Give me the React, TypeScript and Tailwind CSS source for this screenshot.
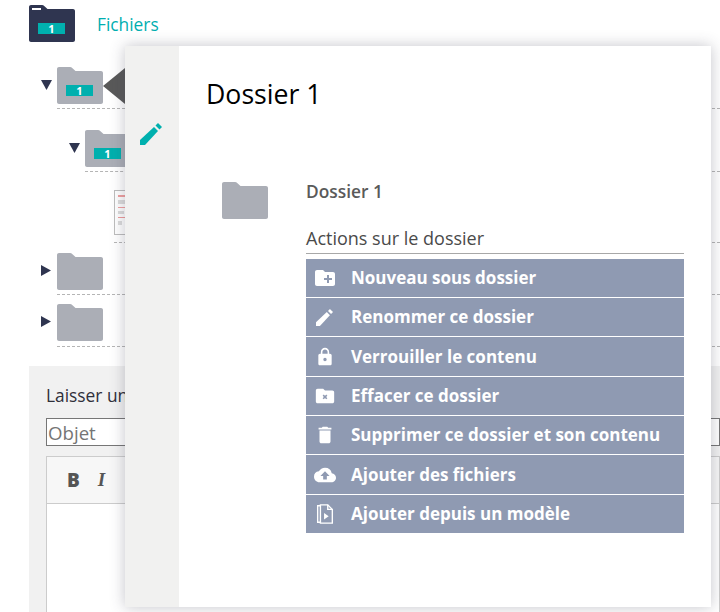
import { MdCloudUpload, MdCreateNewFolder, MdDelete, MdLock } from "react-icons/md";
import type { ReactNode } from "react";

function Folder({ num, dark }: { num?: boolean; dark?: boolean }) {
  const fill = dark ? "#2f3550" : "#abaeb6";
  return (
    <svg width="46" height="37" viewBox="0 0 46 37" className="block shrink-0">
      <path
        d="M2 0h11c1 0 1.600.4 2.200 1l3.300 3H44c1.100 0 2 .9 2 2v29c0 1.100-.9 2-2 2H2c-1.100 0-2-.9-2-2V2C0 .9.900 0 2 0z"
        fill={fill}
      />
      {dark && <rect x="3" y="3" width="9" height="2" fill="#fff" />}
      {num && (
        <>
          <rect x="9" y="18" width="27" height="11" fill="#00b0ae" />
          <text x="22.500" y="28" textAnchor="middle" fontSize="11" fontWeight="700" fill="#fff" fontFamily="Open Sans">
            1
          </text>
        </>
      )}
    </svg>
  );
}

function Caret({ open }: { open?: boolean }) {
  return open ? (
    <svg width="11" height="10" viewBox="0 0 11 10" className="block mt-px">
      <path d="M0 0h11L5.500 10z" fill="#2f3550" />
    </svg>
  ) : (
    <svg width="10" height="11" viewBox="0 0 10 11" className="block">
      <path d="M0 0l10 5.500L0 11z" fill="#2f3550" />
    </svg>
  );
}

function Pencil({ size, color }: { size: number; color: string }) {
  return (
    <svg width={size} height={size} viewBox="0 0 22 22" fill={color} className="block">
      <path d="M0 17L14 4l4 4L5 22H0z" />
      <path d="M15.500 2.500L18 0l4 4-2.500 2.500z" />
    </svg>
  );
}

function TreeRow({
  indent,
  open,
  num,
  height,
  pad = "pb-[4px]",
}: {
  indent: string;
  open?: boolean;
  num?: boolean;
  height: string;
  pad?: string;
}) {
  return (
    <div className={`flex items-start ${indent} ${height}`}>
      <div className="w-[16px] mt-[12px]">
        <Caret open={open} />
      </div>
      <div className={`flex-1 border-b border-dashed border-[#b5b5b5] ${pad}`}>
        <Folder num={num} />
      </div>
    </div>
  );
}

function Thumb() {
  return (
    <div className="ml-[114px] mt-[18px] border-b border-dashed border-[#b5b5b5] pb-[7px]">
      <div className="w-[30px] h-[45px] border border-[#bdbdbd] bg-white pl-[3px] pt-[4px] flex flex-col gap-[3px]">
        <div className="h-[2px] w-[8px] bg-[#f0a0a0]" />
        <div className="h-[4px] w-[8px] bg-[#dcdcdc]" />
        <div className="h-[1px] w-[8px] bg-[#f0a0a0]" />
        <div className="h-[3px] w-[6px] bg-[#dcdcdc]" />
        <div className="h-[1px] w-[8px] bg-[#ee9a9a]" />
        <div className="h-[4px] w-[4px] bg-[#dcdcdc]" />
      </div>
    </div>
  );
}

function FolderX() {
  return (
    <svg width="22" height="22" viewBox="0 0 24 24" fill="#fff">
      <path d="M20 6h-8l-2-2H4c-1.100 0-2 .9-2 2v12c0 1.100.9 2 2 2h16c1.100 0 2-.9 2-2V8c0-1.100-.9-2-2-2z" />
      <path d="M10 11l4 4M14 11l-4 4" stroke="#8f9ab2" strokeWidth="1.700" />
    </svg>
  );
}

function Template() {
  return (
    <svg width="22" height="22" viewBox="0 0 24 24" fill="none" stroke="#fff" strokeWidth="1.500">
      <path d="M7 3H4v18h3" />
      <path d="M7 2h8l5 5v15H7z" />
      <path d="M15 2v5h5" />
      <path d="M11 11l5 3.500-5 3.500z" fill="#fff" stroke="none" />
    </svg>
  );
}

const actions: { label: string; icon: ReactNode; h: string }[] = [
  { label: "Nouveau sous dossier", icon: <MdCreateNewFolder size={24} />, h: "h-[38px]" },
  { label: "Renommer ce dossier", icon: <Pencil size={17} color="#fff" />, h: "h-[38px]" },
  { label: "Verrouiller le contenu", icon: <MdLock size={20} />, h: "h-[39px]" },
  { label: "Effacer ce dossier", icon: <FolderX />, h: "h-[38px]" },
  { label: "Supprimer ce dossier et son contenu", icon: <MdDelete size={22} />, h: "h-[38px]" },
  { label: "Ajouter des fichiers", icon: <MdCloudUpload size={22} />, h: "h-[39px]" },
  { label: "Ajouter depuis un modèle", icon: <Template />, h: "h-[38px]" },
];

export default function App() {
  return (
    <div className="relative h-[612px] w-[720px] overflow-hidden bg-white font-['Open_Sans',sans-serif]">
      {/* page behind the panel */}
      <div className="flex items-center pl-[29px] pt-[5px] gap-[22px] h-[41px]">
        <Folder num dark />
        <span className="mt-[4px] text-[17.330px] font-medium text-[#00aeb0]">Fichiers</span>
      </div>
      <div className="pt-[26px]">
        <TreeRow indent="ml-[41px]" open num height="h-[63px]" />
        <TreeRow indent="ml-[69px]" open num height="h-[42px]" />
        <Thumb />
        <div className="mt-[10px]">
          <TreeRow indent="ml-[41px]" height="h-[51px]" />
          <TreeRow indent="ml-[41px]" height="h-[43px]" pad="pb-[5px]" />
        </div>
      </div>
      <div className="mt-[19px] ml-[29px] h-[246px] bg-[#f1f1f1] pl-[17px] pt-[18px]">
        <p className="text-[17.330px] leading-[22px] text-[#2f2f3a]">Laisser un message</p>
        <input
          placeholder="Objet"
          className="mt-[12px] block h-[28px] w-full border border-[#767676] bg-white px-px text-[18.670px] placeholder:text-[#757575]"
        />
        <div className="mt-[10px] h-[200px] border border-[#cccccc] bg-white">
          <div className="flex h-[47px] items-center gap-[18px] border-b border-[#cccccc] bg-[#f7f7f7] pl-[20px] text-[19px] text-[#555555]">
            <span className="font-extrabold">B</span>
            <span className="font-['Liberation_Serif',serif] font-bold italic">I</span>
          </div>
        </div>
      </div>

      {/* callout arrow */}
      <div className="absolute left-[103px] top-[68px] border-y-[18px] border-r-[22px] border-y-transparent border-r-[#595959]" />

      {/* folder panel */}
      <div className="absolute left-[125px] top-[46px] flex h-[561px] w-[586px] bg-white shadow-[0_0_14px_rgba(60,60,80,0.3)]">
        <div className="w-[54px] shrink-0 bg-[#f1f1f0] pt-[77px] pl-[15px]">
          <Pencil size={22} color="#00b0ae" />
        </div>
        <div className="flex-1">
          <h1 className="pl-[27px] pt-[30px] text-[26.670px] leading-[36px] font-normal text-black">Dossier 1</h1>
          <div className="flex pt-[50px] pl-[43px]">
            <div className="pt-[20px]">
              <Folder />
            </div>
            <div className="ml-[38px] w-[378px] pt-[18px]">
              <p className="text-[17.330px] leading-[22px] font-semibold text-[#5a5a5a]">Dossier 1</p>
              <p className="mt-[25px] text-[18px] leading-[22px] text-[#4a4a4a] border-b border-[#a8a8a8] pb-[4px]">
                Actions sur le dossier
              </p>
              <div className="mt-[5px] flex flex-col gap-px">
                {actions.map((a) => (
                  <div key={a.label} className={`flex items-center bg-[#8f9ab2] text-white ${a.h}`}>
                    <span className="flex w-[45px] shrink-0 justify-center pr-[10px] pl-[2px]">{a.icon}</span>
                    <span className="text-[17px] font-bold">{a.label}</span>
                  </div>
                ))}
              </div>
            </div>
          </div>
        </div>
      </div>
    </div>
  );
}
